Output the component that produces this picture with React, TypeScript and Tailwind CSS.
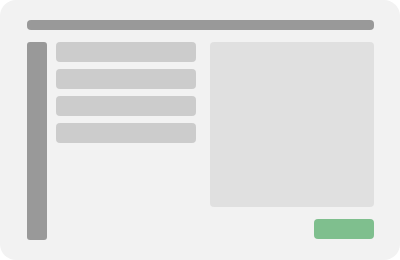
export default function App() {
  const rows = [0, 1, 2, 3]

  return (
    <div className="w-[400px] h-[260px] bg-white">
      <div className="w-full h-full rounded-2xl bg-[#f2f2f2] pl-[27px] pr-[26px] pt-5 pb-5 flex flex-col gap-3">
        {/* header bar */}
        <div className="h-[10px] rounded-sm bg-[#999999]" />

        <div className="flex flex-1">
          {/* sidebar */}
          <div className="w-5 rounded-[3px] bg-[#999999]" />

          {/* list */}
          <div className="ml-[9px] w-[140px] flex flex-col gap-[7px]">
            {rows.map((r) => (
              <div key={r} className="h-5 rounded-[4px] bg-[#cccccc]" />
            ))}
          </div>

          {/* content */}
          <div className="ml-[14px] flex-1 flex flex-col">
            <div className="h-[165px] rounded-[4px] bg-[#e0e0e0]" />
            <div className="mt-3 flex justify-end">
              <div className="w-[60px] h-5 rounded-[4px] bg-[#7fbf8e]" />
            </div>
          </div>
        </div>
      </div>
    </div>
  )
}
